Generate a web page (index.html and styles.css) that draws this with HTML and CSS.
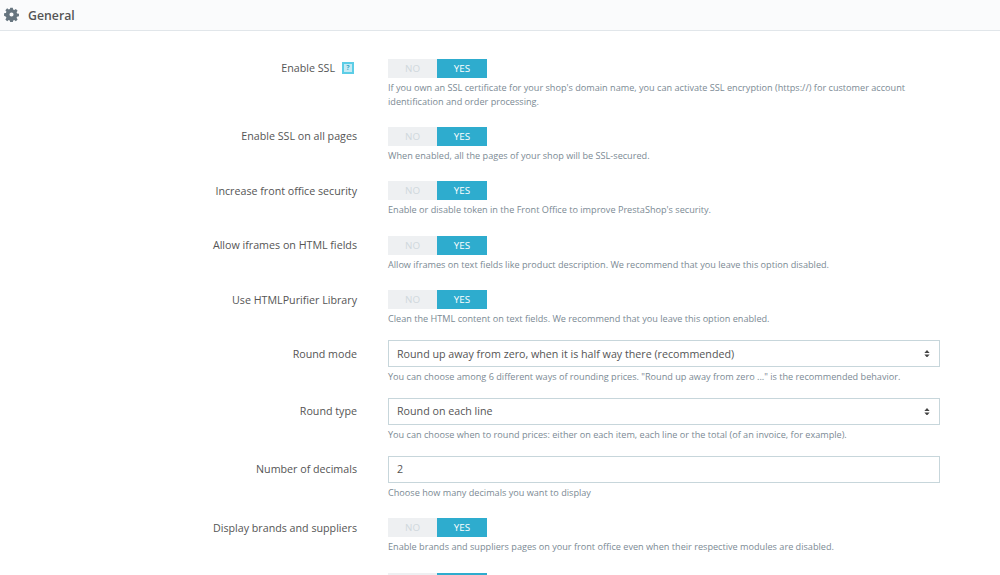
FILE: index.html
```html
<!DOCTYPE html>
<html lang="en">
<head>
<meta charset="utf-8">
<title>General</title>
<link rel="stylesheet" href="styles.css">
</head>
<body>
<header class="panel-heading">
  <svg class="gear" viewBox="0 0 24 24" aria-hidden="true"><path fill-rule="evenodd" d="M9.800 0h4.400l.6 3.300c.7.2 1.400.5 2 .9l2.800-1.900 3.100 3.100-1.900 2.800c.4.6.7 1.300.9 2l3.300.6v4.400l-3.300.6c-.2.7-.5 1.400-.9 2l1.900 2.800-3.100 3.100-2.800-1.900c-.6.4-1.300.7-2 .9l-.6 3.300H9.800l-.6-3.300c-.7-.2-1.400-.5-2-.9l-2.800 1.900-3.100-3.100 1.900-2.800c-.4-.6-.7-1.300-.9-2L-1 14.200V9.800l3.300-.6c.2-.7.5-1.400.9-2L1.300 4.400l3.100-3.100 2.800 1.900c.6-.4 1.300-.7 2-.9L9.800 0zM12 8.400a3.600 3.600 0 1 0 0 7.200 3.600 3.600 0 0 0 0-7.200z" transform="translate(1 1) scale(.917)"/></svg>
  <span>General</span>
</header>
<main class="form">
  <div class="row row-tall">
    <div class="label">Enable SSL<span class="help-box">?</span></div>
    <div class="field">
      <div class="toggle"><span class="no">NO</span><span class="yes">YES</span></div>
      <p class="help">If you own an SSL certificate for your shop's domain name, you can activate SSL encryption (https://) for customer account identification and order processing.</p>
    </div>
  </div>
  <div class="row">
    <div class="label">Enable SSL on all pages</div>
    <div class="field">
      <div class="toggle"><span class="no">NO</span><span class="yes">YES</span></div>
      <p class="help">When enabled, all the pages of your shop will be SSL-secured.</p>
    </div>
  </div>
  <div class="row">
    <div class="label">Increase front office security</div>
    <div class="field">
      <div class="toggle"><span class="no">NO</span><span class="yes">YES</span></div>
      <p class="help">Enable or disable token in the Front Office to improve PrestaShop's security.</p>
    </div>
  </div>
  <div class="row">
    <div class="label">Allow iframes on HTML fields</div>
    <div class="field">
      <div class="toggle"><span class="no">NO</span><span class="yes">YES</span></div>
      <p class="help">Allow iframes on text fields like product description. We recommend that you leave this option disabled.</p>
    </div>
  </div>
  <div class="row">
    <div class="label">Use HTMLPurifier Library</div>
    <div class="field">
      <div class="toggle"><span class="no">NO</span><span class="yes">YES</span></div>
      <p class="help">Clean the HTML content on text fields. We recommend that you leave this option enabled.</p>
    </div>
  </div>
  <div class="row row-input">
    <div class="label">Round mode</div>
    <div class="field">
      <div class="input"><span>Round up away from zero, when it is half way there (recommended)</span><svg class="carets" viewBox="0 0 8 10" aria-hidden="true"><path d="M4 0l3.500 4H.5zM4 10L.5 6h7z"/></svg></div>
      <p class="help">You can choose among 6 different ways of rounding prices. "Round up away from zero ..." is the recommended behavior.</p>
    </div>
  </div>
  <div class="row row-input">
    <div class="label">Round type</div>
    <div class="field">
      <div class="input"><span>Round on each line</span><svg class="carets" viewBox="0 0 8 10" aria-hidden="true"><path d="M4 0l3.500 4H.5zM4 10L.5 6h7z"/></svg></div>
      <p class="help">You can choose when to round prices: either on each item, each line or the total (of an invoice, for example).</p>
    </div>
  </div>
  <div class="row row-input">
    <div class="label">Number of decimals</div>
    <div class="field">
      <div class="input"><span>2</span></div>
      <p class="help">Choose how many decimals you want to display</p>
    </div>
  </div>
  <div class="row">
    <div class="label">Display brands and suppliers</div>
    <div class="field">
      <div class="toggle"><span class="no">NO</span><span class="yes">YES</span></div>
      <p class="help">Enable brands and suppliers pages on your front office even when their respective modules are disabled.</p>
    </div>
  </div>
  <div class="row row-last">
    <div class="label"></div>
    <div class="field">
      <div class="toggle"><span class="no"></span><span class="yes"></span></div>
    </div>
  </div>
</main>
</body>
</html>
```
FILE: styles.css
```css
html, body {
  margin: 0;
  height: 575px;
  overflow: hidden;
  background: #fff;
}
body {
  font-family: "Open Sans", "Liberation Sans", sans-serif;
  color: #555;
}
.panel-heading {
  display: flex;
  align-items: center;
  gap: 9px;
  height: 31px;
  box-sizing: border-box;
  padding-left: 4px;
  background: #fafbfc;
  border-bottom: 1px solid #e1e6ea;
  font-size: 12.300px;
  font-weight: 600;
  color: #555;
}
.gear {
  width: 15px;
  height: 15px;
  margin-top: -1px;
  fill: #66757f;
}
.form {
  padding-top: 23.500px;
}
.row {
  display: grid;
  grid-template-columns: 357px 552px;
  column-gap: 31px;
  height: 54.500px;
}
.row-tall {
  height: 68px;
}
.row-input {
  height: 57.900px;
}
.row-last {
  height: 20px;
}
.label {
  display: flex;
  justify-content: flex-end;
  align-items: center;
  height: 19px;
  margin-top: 4px;
  font-size: 10.700px;
  color: #555;
  white-space: nowrap;
}
.row-input .label {
  height: 27px;
  margin-top: -0.500px;
}
.help-box {
  box-sizing: border-box;
  width: 12px;
  height: 12px;
  margin-left: 7px;
  margin-right: 3px;
  border: 2px solid #5ccde6;
  background: #c4eaf4;
  color: #3aa9c8;
  font-size: 7px;
  font-weight: 700;
  line-height: 8px;
  text-align: center;
}
.toggle {
  display: flex;
  width: 99px;
  height: 19px;
  margin-top: 4px;
  font-size: 9.800px;
  font-weight: 500;
  line-height: 19px;
  text-align: center;
}
.no {
  width: 49px;
  background: #eef0f2;
  color: #d0d8dd;
}
.yes {
  width: 50px;
  background: #2eacce;
  color: #fff;
}
.input {
  display: flex;
  align-items: center;
  justify-content: space-between;
  height: 27px;
  box-sizing: border-box;
  margin-top: -0.500px;
  padding: 0 9px 0 8px;
  border: 1px solid #c7d6db;
  background: #fff;
  font-size: 10.700px;
  color: #555;
}
.carets {
  width: 6px;
  height: 7.500px;
  fill: #444;
}
.help {
  margin: 3px 0 0;
  font-size: 9.150px;
  line-height: 14px;
  color: #7b8a94;
}
```
